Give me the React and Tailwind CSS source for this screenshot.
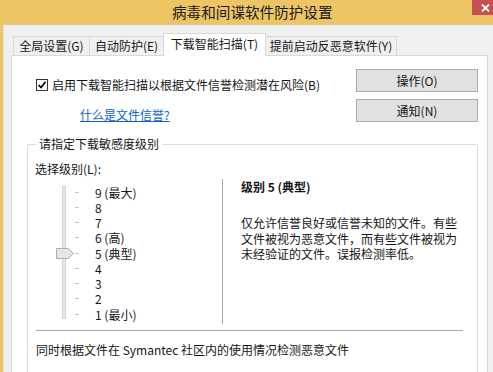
export default function App() {
  const levels = ["9 (最大)", "8", "7", "6 (高)", "5 (典型)", "4", "3", "2", "1 (最小)"];
  const tabBase =
    "-ml-px first:ml-0 border border-b-0 border-[#d9d9d9] flex items-center justify-center whitespace-nowrap";
  return (
    <div className="w-[493px] h-[372px] overflow-hidden bg-[#f0f0f0] text-[12px] leading-[16px] text-[#151515] font-['Noto_Sans_CJK_SC','Noto_Sans',sans-serif]">
      {/* Title bar */}
      <div className="relative h-[25px] bg-[#eec564] border-b border-[#e2c77e] flex items-center">
        <span className="ml-[172px] text-[14.6px] leading-none text-[#1a1a1a]">病毒和间谍软件防护设置</span>
        <div className="absolute right-0 top-0 w-[21px] h-[15px] bg-[#c75050] flex items-center justify-end pr-[3px]">
          <svg width="9" height="8" viewBox="0 0 9 8">
            <path d="M1 0.5L8 7.5M8 0.5L1 7.5" stroke="#ffffff" strokeWidth="1.8" />
          </svg>
        </div>
      </div>

      {/* Body */}
      <div className="flex h-[347px]">
        <div className="w-[3px] bg-[#eec564]" />
        <div className="flex-1 border-l border-[#e4e4e4] pl-[7px] pr-[5px] pt-[8px]">
          {/* Tabs */}
          <div className="flex items-end pl-[2px] h-[22px]">
            <div className={`${tabBase} w-[77px] h-[19px] bg-[#f0f0f0]`}>全局设置(G)</div>
            <div className={`${tabBase} w-[75px] h-[19px] bg-[#f0f0f0]`}>自动防护(E)</div>
            <div className={`${tabBase} relative z-10 w-[103px] h-[23px] -mb-px bg-white pb-[3px]`}>下载智能扫描(T)</div>
            <div className={`${tabBase} w-[132px] h-[19px] bg-[#f0f0f0]`}>提前启动反恶意软件(Y)</div>
          </div>

          {/* Panel */}
          <div className="h-[340px] border border-[#d9d9d9] bg-white pl-[15px] pr-[9px] pt-[13px]">
            <div className="flex justify-between">
              <div className="pl-[9px]">
                <div className="flex items-center mt-[8px] h-[16px]">
                  <div className="w-[12px] h-[12px] border border-[#333333] bg-white flex items-center justify-center">
                    <svg width="10" height="10" viewBox="0 0 10 10">
                      <path d="M1.5 5L4 7.5L8.5 1.8" fill="none" stroke="#000000" strokeWidth="1.7" />
                    </svg>
                  </div>
                  <span className="ml-[4px] whitespace-nowrap">启用下载智能扫描以根据文件信誉检测潜在风险(B)</span>
                </div>
                <div className="mt-[14px] ml-[44px] text-[#0a64c8] underline whitespace-nowrap">什么是文件信誉?</div>
              </div>
              <div className="flex flex-col gap-[7px]">
                <div className="w-[122px] h-[23px] border border-[#adadad] bg-[#e1e1e1] flex items-center justify-center">操作(O)</div>
                <div className="w-[122px] h-[23px] border border-[#adadad] bg-[#e1e1e1] flex items-center justify-center">通知(N)</div>
              </div>
            </div>

            {/* Group box */}
            <fieldset className="mt-[13px] h-[260px] border border-[#dcdcdc] rounded-[2px] pl-[8px]">
              <legend className="px-[3px] leading-[16px]">请指定下载敏感度级别</legend>
              <div className="mt-[9px] -ml-px">选择级别(L):</div>

              <div className="flex mt-[2px] h-[145px]">
                {/* slider */}
                <div className="w-[186px] flex">
                  <div className="relative ml-[26px] mt-[7px] w-[4px] h-[133px] bg-[#e7e7e7] border border-[#d4d4d4]">
                    <svg className="absolute left-[-7px] top-[61px]" width="18" height="11" viewBox="0 0 18 11">
                      <path d="M0.5 0.5H12L17.5 5.5L12 10.5H0.5Z" fill="#e6e6e6" stroke="#adadad" />
                    </svg>
                  </div>
                  <div className="ml-[9px] pt-[5.4px]">
                    {levels.map((l) => (
                      <div key={l} className="flex items-center h-[15.25px]">
                        <div className="w-[4px] h-px bg-[#c4c4c4]" />
                        <span className="ml-[16px] leading-[15px] whitespace-nowrap">{l}</span>
                      </div>
                    ))}
                  </div>
                </div>
                <div className="border-l border-[#a9a9a9] pl-[18px]">
                  <div className="font-bold leading-[16px]">级别 5 (典型)</div>
                  <div className="mt-[20px] leading-[15.5px] whitespace-nowrap">
                    仅允许信誉良好或信誉未知的文件。有些
                    <br />
                    文件被视为恶意文件，而有些文件被视为
                    <br />
                    未经验证的文件。误报检测率低。
                  </div>
                </div>
              </div>

              <div className="mt-[6px] w-[427px] border-t border-[#a9a9a9]" />
              <div className="mt-[11px] whitespace-nowrap">同时根据文件在 Symantec 社区内的使用情况检测恶意文件</div>
            </fieldset>
          </div>
        </div>
      </div>
    </div>
  );
}
